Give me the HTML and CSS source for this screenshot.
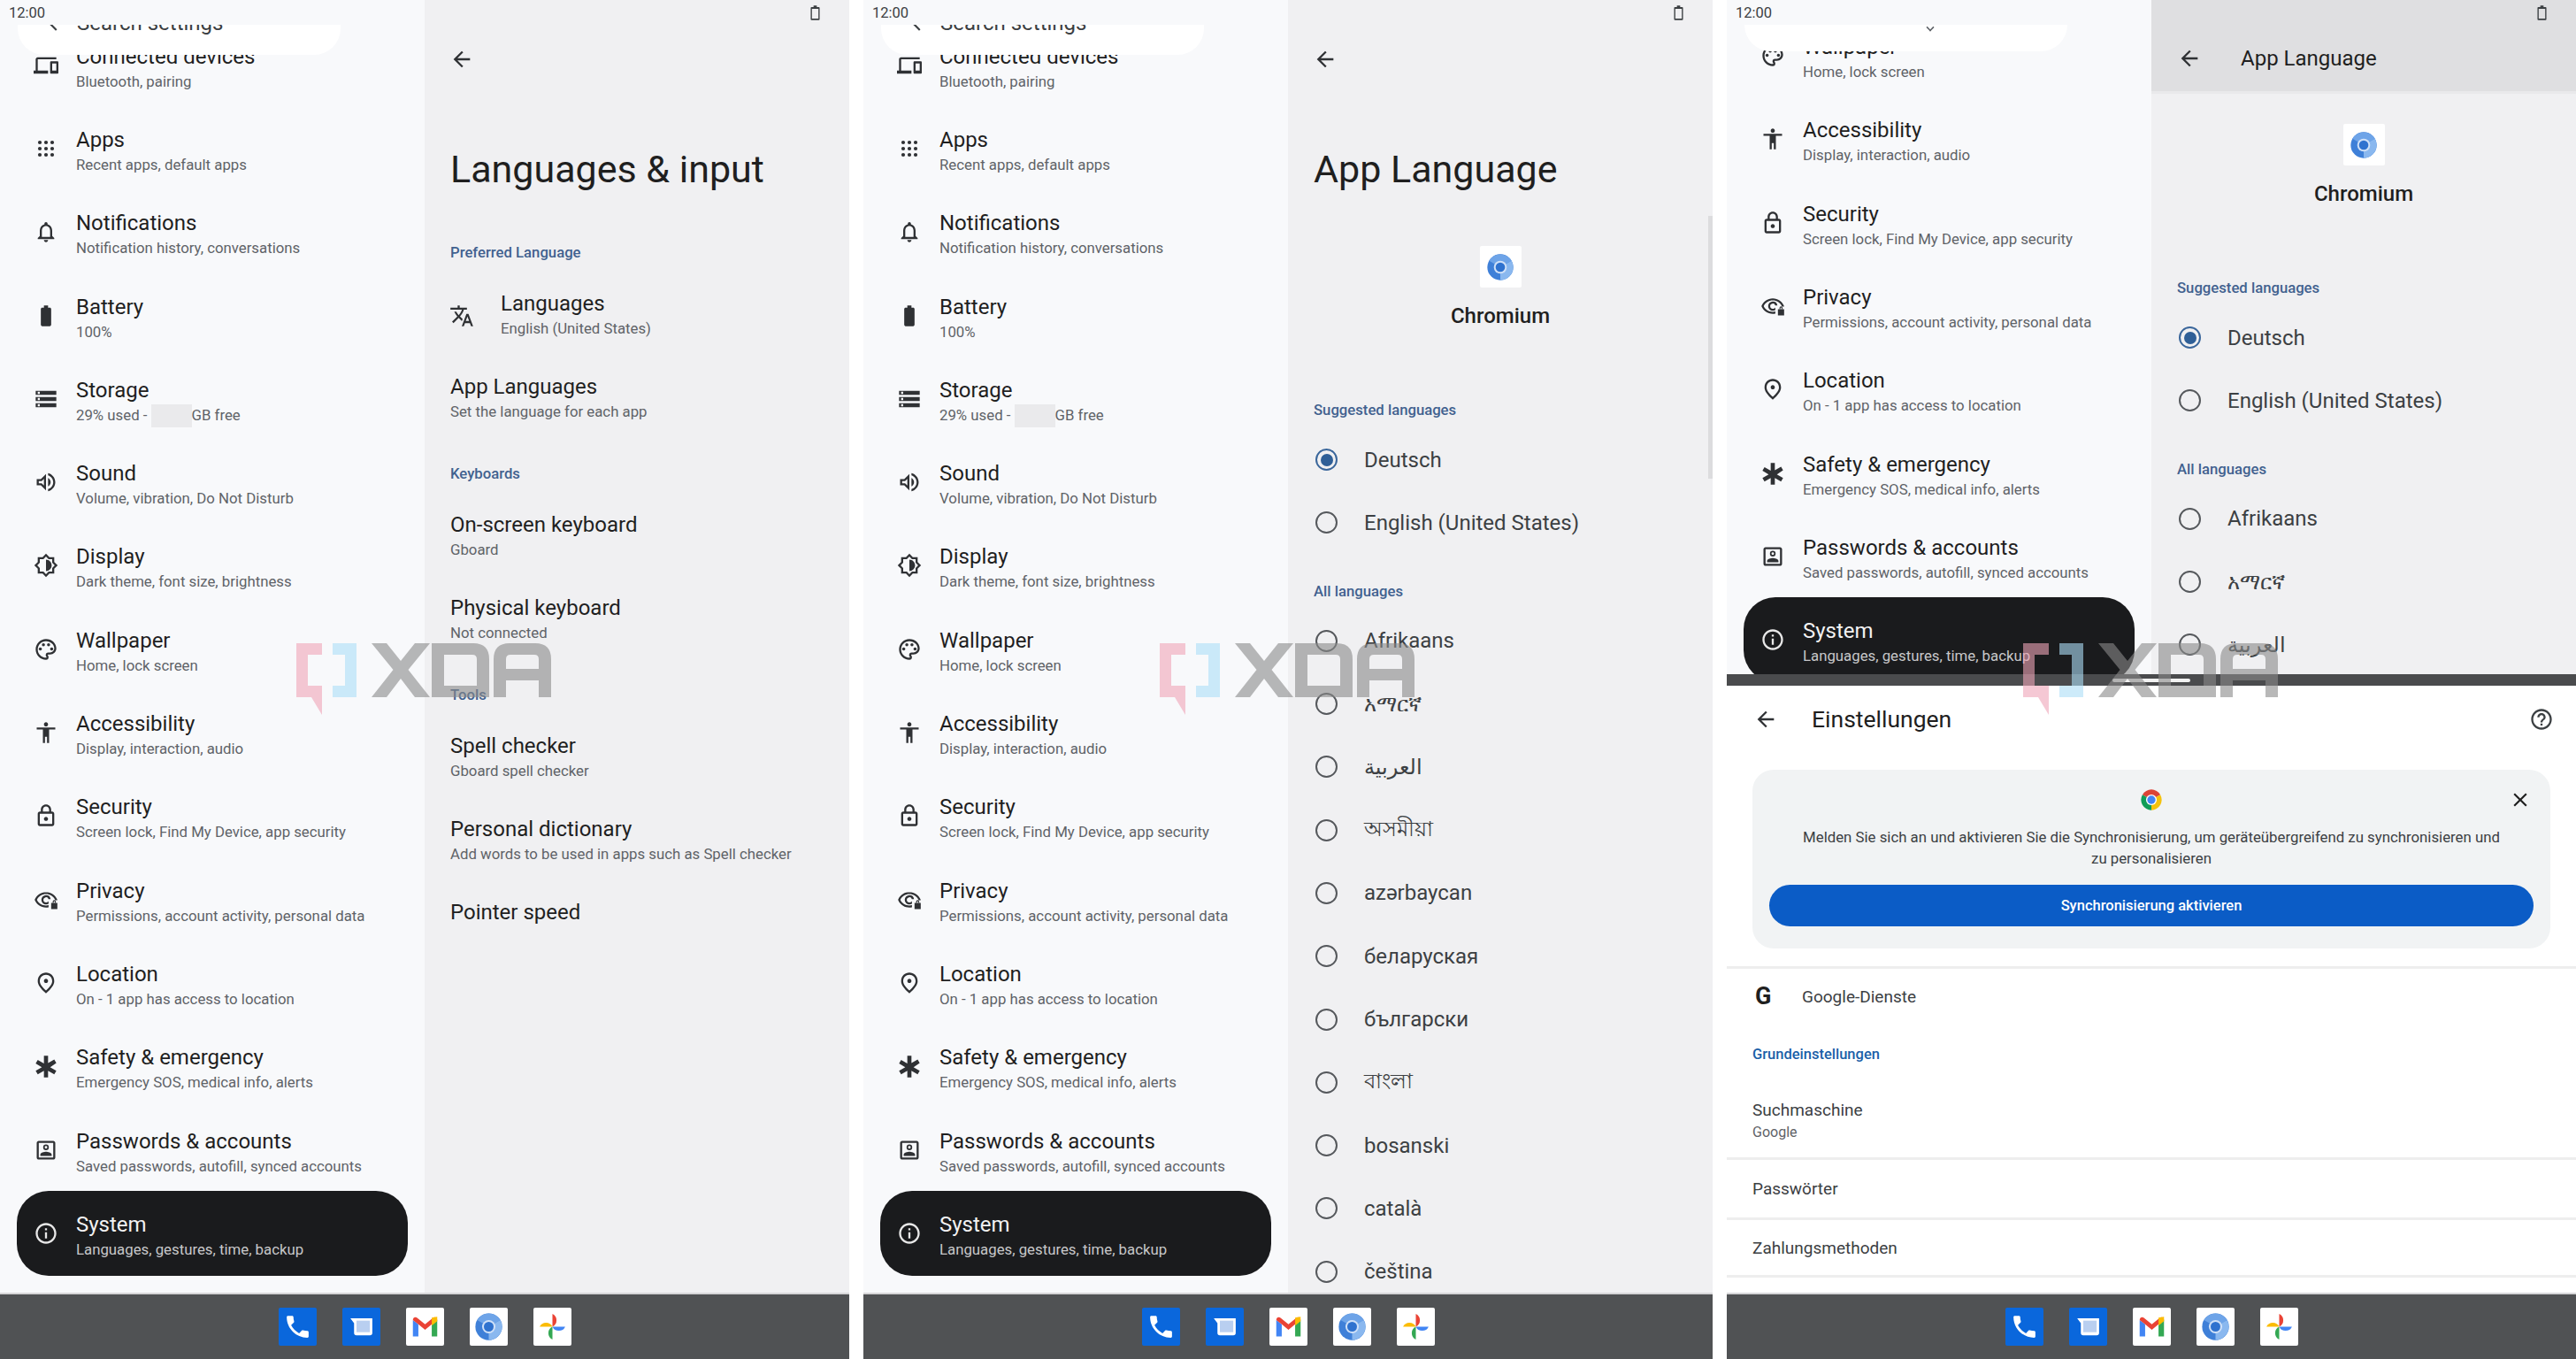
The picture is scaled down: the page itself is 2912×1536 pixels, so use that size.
FILE: index.html
```
<!DOCTYPE html>
<html lang="en">
<head>
<meta charset="utf-8">
<title>Languages &amp; input</title>
<link rel="stylesheet" href="styles.css">
</head>
<body>
<svg class="sprite" xmlns="http://www.w3.org/2000/svg">
  <symbol id="i-devices" viewBox="0 0 24 24"><path d="M4 6h18V4H4c-1.1 0-2 .9-2 2v11H0v3h14v-3H4V6zm19 2h-6c-.55 0-1 .45-1 1v10c0 .55.45 1 1 1h6c.55 0 1-.45 1-1V9c0-.55-.45-1-1-1zm-1 9h-4v-7h4v7z"/></symbol>
  <symbol id="i-apps" viewBox="0 0 24 24"><circle cx="6" cy="6" r="1.8"/><circle cx="12" cy="6" r="1.8"/><circle cx="18" cy="6" r="1.8"/><circle cx="6" cy="12" r="1.8"/><circle cx="12" cy="12" r="1.8"/><circle cx="18" cy="12" r="1.8"/><circle cx="6" cy="18" r="1.8"/><circle cx="12" cy="18" r="1.8"/><circle cx="18" cy="18" r="1.8"/></symbol>
  <symbol id="i-bell" viewBox="0 0 24 24"><path d="M12 22c1.1 0 2-.9 2-2h-4c0 1.1.9 2 2 2zm6-6v-5c0-3.07-1.63-5.64-4.5-6.32V4c0-.83-.67-1.5-1.5-1.5s-1.5.67-1.5 1.5v.68C7.64 5.36 6 7.92 6 11v5l-2 2v1h16v-1l-2-2zm-2 1H8v-6c0-2.48 1.51-4.5 4-4.5s4 2.02 4 4.5v6z"/></symbol>
  <symbol id="i-battery" viewBox="0 0 24 24"><path d="M15.67 4H14V2h-4v2H8.33C7.6 4 7 4.6 7 5.33v15.33C7 21.4 7.6 22 8.33 22h7.33c.74 0 1.34-.6 1.34-1.33V5.33C17 4.6 16.4 4 15.67 4z"/></symbol>
  <symbol id="i-storage" viewBox="0 0 24 24"><path d="M2 20h20v-4H2v4zm2-3h2v2H4v-2zM2 4v4h20V4H2zm4 3H4V5h2v2zm-4 7h20v-4H2v4zm2-3h2v2H4v-2z"/></symbol>
  <symbol id="i-sound" viewBox="0 0 24 24"><path d="M3 9v6h4l5 5V4L7 9H3zm7-.17v6.34L7.83 13H5v-2h2.83L10 8.83zM16.5 12c0-1.77-1.02-3.29-2.5-4.03v8.05c1.48-.73 2.5-2.25 2.5-4.02zM14 3.23v2.06c2.89.86 5 3.54 5 6.71s-2.11 5.85-5 6.71v2.06c4.01-.91 7-4.49 7-8.77 0-4.28-2.99-7.86-7-8.77z"/></symbol>
  <symbol id="i-display" viewBox="0 0 24 24"><path d="M20 8.69V4h-4.69L12 .69 8.69 4H4v4.69L.69 12 4 15.31V20h4.69L12 23.31 15.31 20H20v-4.69L23.31 12 20 8.69zm-2 5.79V18h-3.52L12 20.48 9.52 18H6v-3.52L3.52 12 6 9.52V6h3.52L12 3.52 14.48 6H18v3.52L20.48 12 18 14.48zM12 6.5v11c3.03 0 5.5-2.47 5.5-5.5S15.03 6.5 12 6.5z"/></symbol>
  <symbol id="i-palette" viewBox="0 0 24 24"><path d="M12 22C6.49 22 2 17.51 2 12S6.49 2 12 2s10 4.04 10 9c0 3.31-2.69 6-6 6h-1.77c-.28 0-.5.22-.5.5 0 .12.05.23.13.33.41.47.64 1.06.64 1.67A2.5 2.5 0 0 1 12 22zm0-18c-4.41 0-8 3.59-8 8s3.59 8 8 8c.28 0 .5-.22.5-.5a.54.54 0 0 0-.14-.35c-.41-.46-.63-1.05-.63-1.65a2.5 2.5 0 0 1 2.5-2.5H16c2.21 0 4-1.79 4-4 0-3.86-3.59-7-8-7z"/><circle cx="6.5" cy="11.5" r="1.5"/><circle cx="9.5" cy="7.5" r="1.5"/><circle cx="14.5" cy="7.5" r="1.5"/><circle cx="17.5" cy="11.5" r="1.5"/></symbol>
  <symbol id="i-access" viewBox="0 0 24 24"><path d="M12 2c1.1 0 2 .9 2 2s-.9 2-2 2-2-.9-2-2 .9-2 2-2zm9 7h-6v13h-2v-6h-2v6H9V9H3V7h18v2z"/></symbol>
  <symbol id="i-lock" viewBox="0 0 24 24"><path d="M18 8h-1V6c0-2.76-2.24-5-5-5S7 3.24 7 6v2H6c-1.1 0-2 .9-2 2v10c0 1.1.9 2 2 2h12c1.1 0 2-.9 2-2V10c0-1.1-.9-2-2-2zM9 6c0-1.66 1.34-3 3-3s3 1.34 3 3v2H9V6zm9 14H6V10h12v10zm-6-3c1.1 0 2-.9 2-2s-.9-2-2-2-2 .9-2 2 .9 2 2 2z"/></symbol>
  <symbol id="i-privacy" viewBox="0 0 24 24"><path d="M12 4.5C7 4.5 2.7 7.6 1 12c1.7 4.4 6 7.5 11 7.5.9 0 1.7-.1 2.5-.3v-2.1c-.8.2-1.6.4-2.5.4-3.8 0-7.200-2.200-8.800-5.500C4.800 8.700 8.200 6.500 12 6.500s7.200 2.200 8.800 5.500l-.2.400h2.300c.050-.100.100-.300.100-.400-1.700-4.400-6-7.500-11-7.500zm0 3a4.500 4.500 0 1 0 0 9c.900 0 1.700-.3 2.500-.7v-2.600c-.5.800-1.400 1.300-2.500 1.300a2.500 2.500 0 1 1 2.400-3.200h2.100A4.500 4.500 0 0 0 12 7.500z"/><path d="M17 15h6v6h-6z"/><path d="M18.500 15v-1.200a1.500 1.500 0 0 1 3 0V15h-1v-1.200a.5.5 0 0 0-1 0V15z"/></symbol>
  <symbol id="i-location" viewBox="0 0 24 24"><path d="M12 12c-1.1 0-2-.9-2-2s.9-2 2-2 2 .9 2 2-.9 2-2 2zm6-1.800C18 6.570 15.350 4 12 4s-6 2.570-6 6.200c0 2.340 1.950 5.440 6 9.140 4.050-3.700 6-6.800 6-9.140zM12 2c4.200 0 8 3.220 8 8.200 0 3.320-2.670 7.250-8 11.800-5.330-4.550-8-8.480-8-11.800C4 5.220 7.800 2 12 2z"/></symbol>
  <symbol id="i-safety" viewBox="0 0 24 24"><path d="M10 2h4v7l6-3.500 2 3.460L16 13l6 3.500-2 3.460-6-3.500V23h-4v-6.540l-6 3.500-2-3.460L8 13 2 9.460l2-3.460L10 9.500z"/></symbol>
  <symbol id="i-account" viewBox="0 0 24 24"><path d="M19 3H5c-1.100 0-2 .9-2 2v14c0 1.100.9 2 2 2h14c1.100 0 2-.9 2-2V5c0-1.100-.9-2-2-2zm0 16H5V5h14v14z"/><path d="M12 6.500a2.750 2.750 0 1 0 0 5.500 2.750 2.750 0 0 0 0-5.500zm0 1.500a1.250 1.250 0 1 1 0 2.500 1.250 1.250 0 0 1 0-2.500zM6.500 17.500h11v-1.300c0-1.800-3.700-2.700-5.500-2.700s-5.500.9-5.500 2.700z"/></symbol>
  <symbol id="i-info" viewBox="0 0 24 24"><path d="M11 7h2v2h-2V7zm0 4h2v6h-2v-6zm1-9C6.480 2 2 6.480 2 12s4.480 10 10 10 10-4.480 10-10S17.520 2 12 2zm0 18c-4.410 0-8-3.590-8-8s3.590-8 8-8 8 3.590 8 8-3.590 8-8 8z"/></symbol>
  <symbol id="i-translate" viewBox="0 0 24 24"><path d="M12.870 15.070l-2.540-2.510.03-.03c1.740-1.940 2.980-4.170 3.710-6.530H17V4h-7V2H8v2H1v1.990h11.170C11.500 7.920 10.440 9.750 9 11.350 8.070 10.320 7.300 9.190 6.690 8h-2c.73 1.630 1.730 3.170 2.980 4.560l-5.090 5.020L4 19l5-5 3.110 3.110.76-2.040zM18.500 10h-2L12 22h2l1.120-3h4.750L21 22h2l-4.500-12zm-2.620 7l1.620-4.330L19.120 17h-3.240z"/></symbol>
  <symbol id="i-back" viewBox="0 0 24 24"><path d="M20 11H7.830l5.590-5.590L12 4l-8 8 8 8 1.410-1.410L7.830 13H20v-2z"/></symbol>
  <symbol id="i-help" viewBox="0 0 24 24"><path d="M11 18h2v-2h-2v2zm1-16C6.480 2 2 6.480 2 12s4.480 10 10 10 10-4.480 10-10S17.520 2 12 2zm0 18c-4.410 0-8-3.590-8-8s3.590-8 8-8 8 3.590 8 8-3.590 8-8 8zm0-14c-2.210 0-4 1.790-4 4h2c0-1.100.9-2 2-2s2 .9 2 2c0 2-3 1.750-3 5h2c0-2.250 3-2.500 3-5 0-2.210-1.790-4-4-4z"/></symbol>
  <symbol id="i-close" viewBox="0 0 24 24"><path d="M19 6.410L17.590 5 12 10.590 6.410 5 5 6.410 10.590 12 5 17.590 6.410 19 12 13.410 17.590 19 19 17.590 13.410 12z"/></symbol>
  <symbol id="i-batt-out" viewBox="0 0 12 18"><path d="M4 0h4v2h2.500a1 1 0 0 1 1 1v14a1 1 0 0 1-1 1h-9a1 1 0 0 1-1-1V3a1 1 0 0 1 1-1H4zM2 4v12h8V4z"/></symbol>
  <symbol id="i-chromium" viewBox="0 0 24 24"><circle cx="12" cy="12" r="11" fill="#3f80d8"/><path d="M12 12L2.500 6.500A11 11 0 0 1 21.500 6.500z" fill="#6ea4e8"/><path d="M12 12L12 23A11 11 0 0 0 21.500 6.500z" fill="#8ab8ef"/><circle cx="12" cy="12" r="5.500" fill="#cfe0f7"/><circle cx="12" cy="12" r="4" fill="#2f72cf"/></symbol>
  <symbol id="i-chrome" viewBox="0 0 24 24"><path d="M12 12L3.340 7A10 10 0 0 1 20.660 7z" fill="#db4437"/><path d="M12 12L20.660 7A10 10 0 0 1 12 22z" fill="#f4c20d"/><path d="M12 12L12 22A10 10 0 0 1 3.340 7z" fill="#0f9d58"/><circle cx="12" cy="12" r="5.200" fill="#fff"/><circle cx="12" cy="12" r="4" fill="#4285f4"/></symbol>
  <symbol id="i-phone" viewBox="0 0 24 24"><path d="M6.620 10.790c1.440 2.830 3.760 5.140 6.590 6.590l2.200-2.200c.27-.27.67-.36 1.020-.24 1.120.37 2.330.57 3.570.57.550 0 1 .450 1 1V20c0 .550-.450 1-1 1-9.390 0-17-7.610-17-17 0-.550.450-1 1-1h3.500c.550 0 1 .450 1 1 0 1.250.2 2.450.57 3.570.11.350.030.740-.25 1.020l-2.200 2.200z" fill="#fff"/></symbol>
  <symbol id="i-messages" viewBox="0 0 24 24"><path d="M3 5h18v12a2 2 0 0 1-2 2H8a2 2 0 0 1-2-2V9z" fill="#fff"/><rect x="8" y="7" width="11" height="9.500" fill="#b9cff0"/></symbol>
  <symbol id="i-gmail" viewBox="0 0 24 24"><path d="M2 6.500V20h4.500V10z" fill="#4285f4"/><path d="M17.500 10V20H22V6.500z" fill="#34a853"/><path d="M2 6.500C2 4.500 4 3.500 5.500 4.700L12 10l6.500-5.300C20 3.500 22 4.500 22 6.500L17.500 10 12 14.500 6.500 10z" fill="#ea4335"/><path d="M17.500 4.500L22 3.800V7.500l-4.500 3.500z" fill="#fbbc04"/></symbol>
  <symbol id="i-photos" viewBox="0 0 24 24"><path d="M12 12V1.500a5.800 5.800 0 0 1 0 10.500z" fill="#ea4335"/><path d="M12 12h10.500a5.800 5.800 0 0 1-10.500 0z" fill="#4285f4"/><path d="M12 12v10.500a5.800 5.800 0 0 1 0-10.500z" fill="#34a853"/><path d="M12 12H1.500a5.800 5.800 0 0 1 10.500 0z" fill="#fbbc04"/></symbol>
</svg>

<main class="desk">

<!-- Screen 1 -->
<section class="screen">
  <div class="workspace">
    <nav class="nav">
      <div class="status"><span class="clock">12:00</span></div>
      <div class="nav-clip">
        <div class="search"><svg class="search-icon"><use href="#i-back"/></svg><span>Search settings</span></div>
        <div class="rows">
          <a class="row"><svg class="ico"><use href="#i-devices"/></svg><div><div class="t">Connected devices</div><div class="s">Bluetooth, pairing</div></div></a>
          <a class="row"><svg class="ico"><use href="#i-apps"/></svg><div><div class="t">Apps</div><div class="s">Recent apps, default apps</div></div></a>
          <a class="row"><svg class="ico"><use href="#i-bell"/></svg><div><div class="t">Notifications</div><div class="s">Notification history, conversations</div></div></a>
          <a class="row"><svg class="ico"><use href="#i-battery"/></svg><div><div class="t">Battery</div><div class="s">100%</div></div></a>
          <a class="row"><svg class="ico"><use href="#i-storage"/></svg><div><div class="t">Storage</div><div class="s">29% used - <span class="redact"></span>GB free</div></div></a>
          <a class="row"><svg class="ico"><use href="#i-sound"/></svg><div><div class="t">Sound</div><div class="s">Volume, vibration, Do Not Disturb</div></div></a>
          <a class="row"><svg class="ico"><use href="#i-display"/></svg><div><div class="t">Display</div><div class="s">Dark theme, font size, brightness</div></div></a>
          <a class="row"><svg class="ico"><use href="#i-palette"/></svg><div><div class="t">Wallpaper</div><div class="s">Home, lock screen</div></div></a>
          <a class="row"><svg class="ico"><use href="#i-access"/></svg><div><div class="t">Accessibility</div><div class="s">Display, interaction, audio</div></div></a>
          <a class="row"><svg class="ico"><use href="#i-lock"/></svg><div><div class="t">Security</div><div class="s">Screen lock, Find My Device, app security</div></div></a>
          <a class="row"><svg class="ico"><use href="#i-privacy"/></svg><div><div class="t">Privacy</div><div class="s">Permissions, account activity, personal data</div></div></a>
          <a class="row"><svg class="ico"><use href="#i-location"/></svg><div><div class="t">Location</div><div class="s">On - 1 app has access to location</div></div></a>
          <a class="row"><svg class="ico"><use href="#i-safety"/></svg><div><div class="t">Safety &amp; emergency</div><div class="s">Emergency SOS, medical info, alerts</div></div></a>
          <a class="row"><svg class="ico"><use href="#i-account"/></svg><div><div class="t">Passwords &amp; accounts</div><div class="s">Saved passwords, autofill, synced accounts</div></div></a>
          <a class="row active"><svg class="ico"><use href="#i-info"/></svg><div><div class="t">System</div><div class="s">Languages, gestures, time, backup</div></div></a>
        </div>
      </div>
    </nav>
    <div class="panel">
      <div class="status status-end"><svg class="batt"><use href="#i-batt-out"/></svg></div>
      <div class="appbar"><svg class="ico"><use href="#i-back"/></svg></div>
      <h1 class="heading">Languages &amp; input</h1>
      <h2 class="label label-first">Preferred Language</h2>
      <a class="pref pref-icon"><svg class="ico"><use href="#i-translate"/></svg><div><div class="t">Languages</div><div class="s">English (United States)</div></div></a>
      <a class="pref"><div><div class="t">App Languages</div><div class="s">Set the language for each app</div></div></a>
      <h2 class="label">Keyboards</h2>
      <a class="pref"><div><div class="t">On-screen keyboard</div><div class="s">Gboard</div></div></a>
      <a class="pref"><div><div class="t">Physical keyboard</div><div class="s">Not connected</div></div></a>
      <h2 class="label">Tools</h2>
      <a class="pref"><div><div class="t">Spell checker</div><div class="s">Gboard spell checker</div></div></a>
      <a class="pref"><div><div class="t">Personal dictionary</div><div class="s">Add words to be used in apps such as Spell checker</div></div></a>
      <a class="pref pref-single"><div class="t">Pointer speed</div></a>
    </div>
  </div>
  <div class="dock">
    <span class="tile tile-blue"><svg><use href="#i-phone"/></svg></span>
    <span class="tile tile-blue"><svg><use href="#i-messages"/></svg></span>
    <span class="tile"><svg><use href="#i-gmail"/></svg></span>
    <span class="tile"><svg><use href="#i-chromium"/></svg></span>
    <span class="tile"><svg><use href="#i-photos"/></svg></span>
  </div>
  <svg class="wm" viewBox="0 0 288 81"><use href="#xda"/></svg>
</section>

<!-- Screen 2 -->
<section class="screen">
  <div class="workspace">
    <nav class="nav">
      <div class="status"><span class="clock">12:00</span></div>
      <div class="nav-clip">
        <div class="search"><svg class="search-icon"><use href="#i-back"/></svg><span>Search settings</span></div>
        <div class="rows">
          <a class="row"><svg class="ico"><use href="#i-devices"/></svg><div><div class="t">Connected devices</div><div class="s">Bluetooth, pairing</div></div></a>
          <a class="row"><svg class="ico"><use href="#i-apps"/></svg><div><div class="t">Apps</div><div class="s">Recent apps, default apps</div></div></a>
          <a class="row"><svg class="ico"><use href="#i-bell"/></svg><div><div class="t">Notifications</div><div class="s">Notification history, conversations</div></div></a>
          <a class="row"><svg class="ico"><use href="#i-battery"/></svg><div><div class="t">Battery</div><div class="s">100%</div></div></a>
          <a class="row"><svg class="ico"><use href="#i-storage"/></svg><div><div class="t">Storage</div><div class="s">29% used - <span class="redact"></span>GB free</div></div></a>
          <a class="row"><svg class="ico"><use href="#i-sound"/></svg><div><div class="t">Sound</div><div class="s">Volume, vibration, Do Not Disturb</div></div></a>
          <a class="row"><svg class="ico"><use href="#i-display"/></svg><div><div class="t">Display</div><div class="s">Dark theme, font size, brightness</div></div></a>
          <a class="row"><svg class="ico"><use href="#i-palette"/></svg><div><div class="t">Wallpaper</div><div class="s">Home, lock screen</div></div></a>
          <a class="row"><svg class="ico"><use href="#i-access"/></svg><div><div class="t">Accessibility</div><div class="s">Display, interaction, audio</div></div></a>
          <a class="row"><svg class="ico"><use href="#i-lock"/></svg><div><div class="t">Security</div><div class="s">Screen lock, Find My Device, app security</div></div></a>
          <a class="row"><svg class="ico"><use href="#i-privacy"/></svg><div><div class="t">Privacy</div><div class="s">Permissions, account activity, personal data</div></div></a>
          <a class="row"><svg class="ico"><use href="#i-location"/></svg><div><div class="t">Location</div><div class="s">On - 1 app has access to location</div></div></a>
          <a class="row"><svg class="ico"><use href="#i-safety"/></svg><div><div class="t">Safety &amp; emergency</div><div class="s">Emergency SOS, medical info, alerts</div></div></a>
          <a class="row"><svg class="ico"><use href="#i-account"/></svg><div><div class="t">Passwords &amp; accounts</div><div class="s">Saved passwords, autofill, synced accounts</div></div></a>
          <a class="row active"><svg class="ico"><use href="#i-info"/></svg><div><div class="t">System</div><div class="s">Languages, gestures, time, backup</div></div></a>
        </div>
      </div>
    </nav>
    <div class="panel">
      <div class="scrollbar"></div>
      <div class="status status-end"><svg class="batt"><use href="#i-batt-out"/></svg></div>
      <div class="appbar"><svg class="ico"><use href="#i-back"/></svg></div>
      <h1 class="heading">App Language</h1>
      <div class="app-head">
        <span class="app-icon"><svg><use href="#i-chromium"/></svg></span>
        <div class="app-name">Chromium</div>
      </div>
      <h2 class="label label-lang">Suggested languages</h2>
      <div class="radio-row"><span class="radio checked"></span>Deutsch</div>
      <div class="radio-row"><span class="radio"></span>English (United States)</div>
      <h2 class="label label-lang label-all">All languages</h2>
      <div class="radio-row"><span class="radio"></span>Afrikaans</div>
      <div class="radio-row"><span class="radio"></span>አማርኛ</div>
      <div class="radio-row"><span class="radio"></span>العربية</div>
      <div class="radio-row"><span class="radio"></span>অসমীয়া</div>
      <div class="radio-row"><span class="radio"></span>azərbaycan</div>
      <div class="radio-row"><span class="radio"></span>беларуская</div>
      <div class="radio-row"><span class="radio"></span>български</div>
      <div class="radio-row"><span class="radio"></span>বাংলা</div>
      <div class="radio-row"><span class="radio"></span>bosanski</div>
      <div class="radio-row"><span class="radio"></span>català</div>
      <div class="radio-row"><span class="radio"></span>čeština</div>
    </div>
  </div>
  <div class="dock">
    <span class="tile tile-blue"><svg><use href="#i-phone"/></svg></span>
    <span class="tile tile-blue"><svg><use href="#i-messages"/></svg></span>
    <span class="tile"><svg><use href="#i-gmail"/></svg></span>
    <span class="tile"><svg><use href="#i-chromium"/></svg></span>
    <span class="tile"><svg><use href="#i-photos"/></svg></span>
  </div>
  <svg class="wm" viewBox="0 0 288 81"><use href="#xda"/></svg>
</section>

<!-- Screen 3 -->
<section class="screen">
  <div class="split">
    <div class="workspace workspace-top">
      <nav class="nav">
        <div class="status"><span class="clock">12:00</span></div>
        <div class="nav-clip">
          <div class="search search-scrolled"><span class="search-caret"></span></div>
          <div class="rows rows-scrolled">
            <a class="row"><svg class="ico"><use href="#i-palette"/></svg><div><div class="t">Wallpaper</div><div class="s">Home, lock screen</div></div></a>
            <a class="row"><svg class="ico"><use href="#i-access"/></svg><div><div class="t">Accessibility</div><div class="s">Display, interaction, audio</div></div></a>
            <a class="row"><svg class="ico"><use href="#i-lock"/></svg><div><div class="t">Security</div><div class="s">Screen lock, Find My Device, app security</div></div></a>
            <a class="row"><svg class="ico"><use href="#i-privacy"/></svg><div><div class="t">Privacy</div><div class="s">Permissions, account activity, personal data</div></div></a>
            <a class="row"><svg class="ico"><use href="#i-location"/></svg><div><div class="t">Location</div><div class="s">On - 1 app has access to location</div></div></a>
            <a class="row"><svg class="ico"><use href="#i-safety"/></svg><div><div class="t">Safety &amp; emergency</div><div class="s">Emergency SOS, medical info, alerts</div></div></a>
            <a class="row"><svg class="ico"><use href="#i-account"/></svg><div><div class="t">Passwords &amp; accounts</div><div class="s">Saved passwords, autofill, synced accounts</div></div></a>
            <a class="row active"><svg class="ico"><use href="#i-info"/></svg><div><div class="t">System</div><div class="s">Languages, gestures, time, backup</div></div></a>
          </div>
        </div>
      </nav>
      <div class="panel">
        <header class="topbar">
          <div class="status status-end"><svg class="batt"><use href="#i-batt-out"/></svg></div>
          <div class="topbar-row"><svg class="ico"><use href="#i-back"/></svg><span class="topbar-title">App Language</span></div>
        </header>
        <div class="app-head app-head-compact">
          <span class="app-icon"><svg><use href="#i-chromium"/></svg></span>
          <div class="app-name">Chromium</div>
        </div>
        <h2 class="label label-lang">Suggested languages</h2>
        <div class="radio-row"><span class="radio checked"></span>Deutsch</div>
        <div class="radio-row"><span class="radio"></span>English (United States)</div>
        <h2 class="label label-lang label-all">All languages</h2>
        <div class="radio-row"><span class="radio"></span>Afrikaans</div>
        <div class="radio-row"><span class="radio"></span>አማርኛ</div>
        <div class="radio-row"><span class="radio"></span>العربية</div>
      </div>
    </div>
    <div class="divider"><span class="handle"></span></div>
    <div class="chrome-pane">
      <header class="chrome-bar">
        <svg class="ico"><use href="#i-back"/></svg>
        <span class="chrome-title">Einstellungen</span>
        <svg class="ico chrome-help"><use href="#i-help"/></svg>
      </header>
      <div class="card">
        <svg class="card-close"><use href="#i-close"/></svg>
        <svg class="card-logo"><use href="#i-chrome"/></svg>
        <p class="card-text">Melden Sie sich an und aktivieren Sie die Synchronisierung, um geräteübergreifend zu synchronisieren und zu personalisieren</p>
        <div class="card-btn">Synchronisierung aktivieren</div>
      </div>
      <div class="c-row c-google"><span class="g-mark">G</span><span class="c-t">Google-Dienste</span></div>
      <h2 class="c-label">Grundeinstellungen</h2>
      <div class="c-row c-double"><div class="c-t">Suchmaschine</div><div class="c-s">Google</div></div>
      <div class="c-row c-plain"><span class="c-t">Passwörter</span></div>
      <div class="c-row c-plain"><span class="c-t">Zahlungsmethoden</span></div>
    </div>
  </div>
  <div class="dock">
    <span class="tile tile-blue"><svg><use href="#i-phone"/></svg></span>
    <span class="tile tile-blue"><svg><use href="#i-messages"/></svg></span>
    <span class="tile"><svg><use href="#i-gmail"/></svg></span>
    <span class="tile"><svg><use href="#i-chromium"/></svg></span>
    <span class="tile"><svg><use href="#i-photos"/></svg></span>
  </div>
  <svg class="wm" viewBox="0 0 288 81"><use href="#xda"/></svg>
</section>

</main>

<svg class="sprite" xmlns="http://www.w3.org/2000/svg">
  <symbol id="xda" viewBox="0 0 288 81">
    <path fill="#f0a5b8" d="M0 0H29V13H13V48H29V81L17 61H0z"/>
    <path fill="#addff8" d="M41 0H68V61H41V48H55V13H41z"/>
    <path fill="#8a8a8a" d="M85 0H102L118 20 134 0H151L126.500 30 151 61H134L118 40 102 61H85L109.500 30z"/>
    <path fill="#8a8a8a" fill-rule="evenodd" d="M153 0H200Q218 0 218 18V61H153zM167 13V48H204V18Q204 13 199 13z"/>
    <path fill="#8a8a8a" fill-rule="evenodd" d="M223 61V18Q223 0 241 0H270Q288 0 288 18V61H274V42H237V61zM237 29H274V18Q274 13 269 13H242Q237 13 237 18z"/>
  </symbol>
</svg>
</body>
</html>
```

FILE: styles.css
```
* { box-sizing: border-box; }
html, body { margin: 0; padding: 0; }
body {
  width: 2912px;
  height: 1536px;
  overflow: hidden;
  background: #fff;
  color: #1f1f1f;
  font-family: Roboto, "Noto Sans", "DejaVu Sans", sans-serif;
}
.sprite { display: none; }
.desk {
  display: grid;
  grid-template-columns: repeat(3, 960px);
  column-gap: 16px;
  height: 1536px;
}
.screen {
  position: relative;
  display: flex;
  flex-direction: column;
  height: 1536px;
  overflow: hidden;
}

/* two-pane workspace */
.workspace {
  display: flex;
  height: 1461px;
  overflow: hidden;
}
.split {
  display: flex;
  flex-direction: column;
  height: 1461px;
}
.workspace-top { height: 762px; flex: none; }

.status {
  display: flex;
  align-items: center;
  height: 28px;
  padding: 0 10px;
  flex: none;
}
.status-end { justify-content: flex-end; padding-right: 33px; }
.clock { font-size: 16.500px; color: #3c4043; }
.batt { width: 11px; height: 17px; fill: #3c4043; }

/* settings list */
.nav {
  display: flex;
  flex-direction: column;
  width: 480px;
  flex: none;
  background: #f8f9fb;
}
.nav-clip {
  position: relative;
  flex: 1;
  min-height: 0;
  overflow: hidden;
}
.search {
  position: absolute;
  z-index: 2;
  left: 20px;
  top: -38px;
  display: flex;
  align-items: center;
  width: 365px;
  height: 72px;
  padding-left: 30px;
  background: #fff;
  border-radius: 30px;
  font-size: 24px;
  color: #3c4043;
}
.search-icon { width: 26px; height: 26px; fill: #3c4043; margin-right: 11px; flex: none; }
.search-scrolled { top: -42px; }
.search-caret {
  position: absolute;
  left: 206px;
  top: 41px;
  width: 8px;
  height: 8px;
  border-right: 2px solid #5f6368;
  border-bottom: 2px solid #5f6368;
  transform: rotate(45deg) scale(.8);
}
.rows { padding-top: 2.5px; }
.rows-scrolled { padding-top: 0; margin-top: -8px; }
.row {
  display: flex;
  align-items: center;
  width: 442px;
  height: 94.3px;
  margin-left: 19px;
  padding-left: 19px;
  column-gap: 20px;
}
.row .ico { margin-bottom: 8px; }
.row.active {
  height: 96px;
  margin-top: -5px;
  padding-top: 8px;
  background: #1a1b1d;
  border-radius: 36px;
  color: #f2f2f2;
}
.row.active .s { color: #c7c7c9; }
.row.active .ico { fill: #e8e8e8; }
.ico {
  width: 28px;
  height: 28px;
  flex: none;
  fill: #2f3134;
}
.t { font-size: 24px; line-height: 28px; white-space: nowrap; }
.s { font-size: 16.800px; line-height: 28px; color: #5f6368; white-space: nowrap; }
.redact {
  display: inline-block;
  width: 46px;
  height: 26px;
  vertical-align: middle;
  background: #eaeaec;
}

/* detail panel */
.panel {
  position: relative;
  flex: 1;
  min-width: 0;
  overflow: hidden;
  background: #f0f0f2;
}
.appbar {
  display: flex;
  align-items: center;
  height: 78px;
  padding-left: 28px;
}
.heading {
  margin: 57px 0 0 29px;
  font-size: 43px;
  line-height: 56px;
  font-weight: 400;
}
.label {
  height: 20px;
  margin: 28px 0 14px 29px;
  font-size: 16.700px;
  line-height: 20px;
  font-weight: 500;
  color: #41618f;
}
.label-first { margin-top: 57px; }
.pref {
  display: flex;
  align-items: center;
  height: 94px;
  padding-left: 29px;
}
.pref-icon { padding-left: 28px; column-gap: 30px; }
.pref-single { height: 66px; }

.scrollbar {
  position: absolute;
  top: 244px;
  right: 0;
  width: 5px;
  height: 297px;
  background: #dcdcde;
}
.app-head {
  display: flex;
  flex-direction: column;
  align-items: center;
  margin-top: 59px;
}
.app-head-compact { margin-top: 34px; }
.app-icon {
  display: flex;
  align-items: center;
  justify-content: center;
  width: 47px;
  height: 47px;
  background: #fff;
  border-radius: 2px;
}
.app-icon svg { width: 32px; height: 32px; }
.app-name {
  margin-top: 18px;
  font-size: 24px;
  line-height: 28px;
  font-weight: 500;
}
.label-lang { margin-top: 83px; margin-bottom: 10px; }
.label-all { margin-top: 32px; }
.radio-row {
  display: flex;
  align-items: center;
  column-gap: 30px;
  height: 71.3px;
  padding-left: 31px;
  font-size: 24px;
  color: #3c4043;
  white-space: nowrap;
}
.radio {
  position: relative;
  width: 25px;
  height: 25px;
  flex: none;
  border: 2.5px solid #55585c;
  border-radius: 50%;
}
.radio.checked { border-color: #3a669b; }
.radio.checked::after {
  content: "";
  position: absolute;
  inset: 3.5px;
  border-radius: 50%;
  background: #2f5f97;
}

/* split-screen top bar */
.topbar {
  height: 106px;
  background: #dfdfe1;
  border-bottom: 3px solid #e9e9eb;
}
.topbar-row {
  display: flex;
  align-items: center;
  height: 75px;
  padding-left: 29px;
  column-gap: 44px;
}
.topbar-title { font-size: 24px; line-height: 32px; }

/* divider */
.divider {
  position: relative;
  display: flex;
  align-items: center;
  justify-content: center;
  height: 13px;
  flex: none;
  background: #4a4b4d;
}
.handle {
  width: 88px;
  height: 4px;
  background: #f2f2f2;
  border-radius: 2px;
}

/* browser settings pane */
.chrome-pane {
  flex: 1;
  min-height: 0;
  overflow: hidden;
  background: #fff;
}
.chrome-bar {
  display: flex;
  align-items: center;
  height: 76px;
  padding: 0 25px 0 30px;
  column-gap: 38px;
}
.chrome-title { font-size: 26.500px; line-height: 32px; flex: 1; }
.chrome-help { fill: #3c4043; }
.card {
  position: relative;
  display: flex;
  flex-direction: column;
  align-items: center;
  height: 202px;
  margin: 19px 29px 0;
  padding: 20px 19px 0;
  background: #f1f3f4;
  border-radius: 24px;
}
.card-logo { width: 28px; height: 28px; flex: none; }
.card-close {
  position: absolute;
  top: 21px;
  right: 21px;
  width: 26px;
  height: 26px;
  fill: #1f1f1f;
}
.card-text {
  max-width: 800px;
  margin: 16px 0 0;
  font-size: 16.800px;
  line-height: 24px;
  color: #3c4043;
  text-align: center;
}
.card-btn {
  display: flex;
  align-items: center;
  justify-content: center;
  width: 100%;
  height: 47px;
  margin-top: 18px;
  background: #0b5cc6;
  border-radius: 24px;
  color: #fff;
  font-size: 16.500px;
  font-weight: 500;
}
.c-row { padding-left: 29px; border-top: 3px solid #eeeeee; }
.c-google {
  display: flex;
  align-items: center;
  column-gap: 33px;
  height: 65px;
  margin-top: 20px;
  padding-left: 32px;
}
.g-mark { font-size: 27px; font-weight: 700; color: #1f1f1f; width: 20px; }
.c-t { font-size: 19px; line-height: 25px; color: #3c4043; }
.c-s { font-size: 16px; line-height: 25px; color: #5f6368; }
.c-label {
  height: 20px;
  margin: 25px 0 20px 29px;
  font-size: 16.500px;
  line-height: 20px;
  font-weight: 500;
  color: #1a5fa8;
}
.c-double { border-top: 0; padding-top: 20px; height: 86px; }
.c-plain {
  display: flex;
  align-items: center;
  height: 68px;
}
.c-plain:last-child { border-bottom: 3px solid #eeeeee; }

/* dock */
.dock {
  display: flex;
  justify-content: center;
  column-gap: 29px;
  height: 75px;
  padding-top: 15px;
  flex: none;
  background: #505254;
  border-top: 2px solid #d6d6d8;
}
.tile {
  display: flex;
  align-items: center;
  justify-content: center;
  width: 43px;
  height: 43px;
  background: #fff;
  border-radius: 2px;
}
.tile-blue { background: #0a67dc; }
.tile svg { width: 33px; height: 33px; }

/* watermark */
.wm {
  position: absolute;
  left: 335px;
  top: 727px;
  width: 288px;
  height: 81px;
  opacity: .6;
  pointer-events: none;
}
```
